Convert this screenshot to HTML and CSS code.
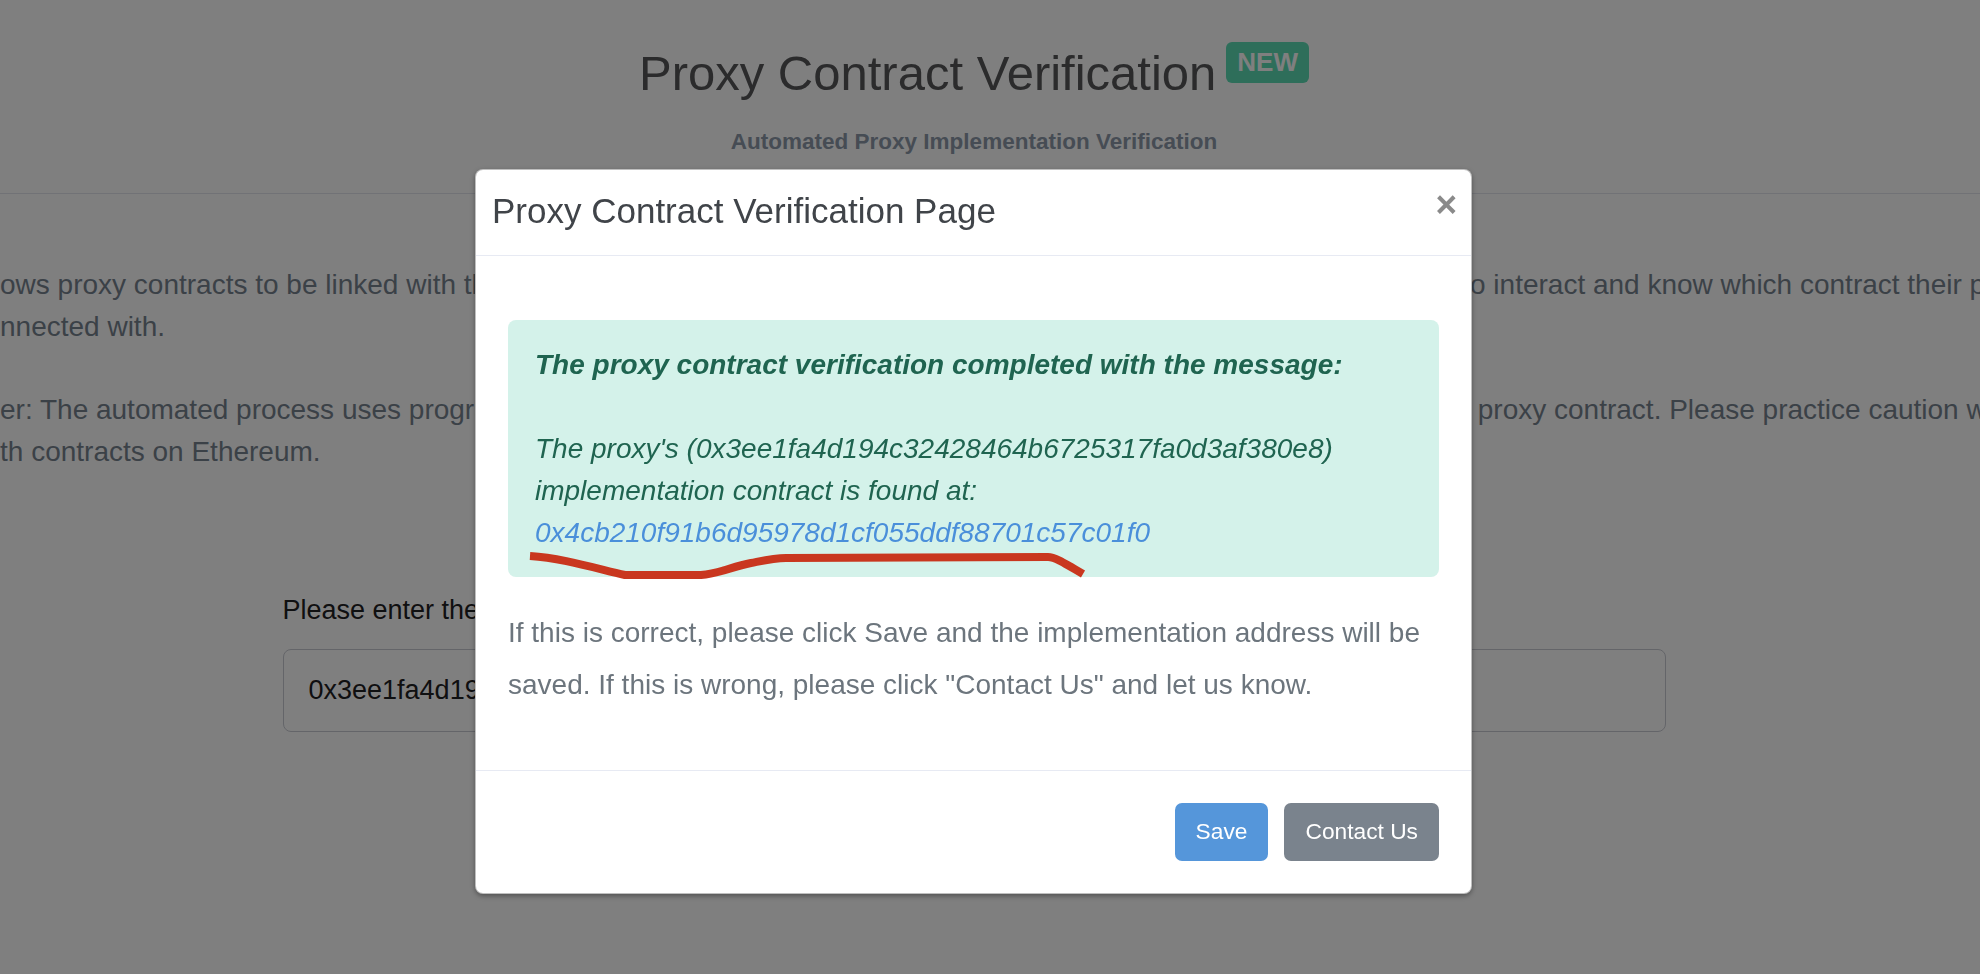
FILE: index.html
```html
<!DOCTYPE html>
<html lang="en">
<head>
<meta charset="utf-8">
<title>Proxy Contract Verification</title>
<link rel="stylesheet" href="styles.css">
</head>
<body>
<div class="page">
  <header class="page-header">
    <h1 class="title">Proxy Contract Verification<span class="badge-new">NEW</span></h1>
    <p class="subtitle">Automated Proxy Implementation Verification</p>
  </header>
  <main class="content">
    <div class="para">
      <div class="line"><span class="lead">ows proxy contracts to be linked with their implementation contract address so that users are able t</span><span class="tail">o interact and know which contract their proxy is co</span></div>
      <div class="line">nnected with.</div>
    </div>
    <div class="para">
      <div class="line"><span class="lead">er: The automated process uses programmatic logic to determine the implementation contract of the</span><span class="tail">&nbsp;proxy contract. Please practice caution when interacting wi</span></div>
      <div class="line">th contracts on Ethereum.</div>
    </div>
    <form class="verify-form">
      <label class="form-label" for="addr">Please enter the Proxy Contract Address you would like to verify</label>
      <input class="form-input" id="addr" type="text" value="0x3ee1fa4d194c32428464b6725317fa0d3af380e8">
    </form>
  </main>
</div>

<div class="backdrop"></div>

<div class="modal">
  <div class="modal-header">
    <h5 class="modal-title">Proxy Contract Verification Page</h5>
    <span class="close">&times;</span>
  </div>
  <div class="modal-body">
    <div class="alert">
      <strong>The proxy contract verification completed with the message:</strong><br><br>
      The proxy's (0x3ee1fa4d194c32428464b6725317fa0d3af380e8) implementation contract is found at: <a class="alert-link" href="#">0x4cb210f91b6d95978d1cf055ddf88701c57c01f0</a>
    </div>
    <p class="modal-text">If this is correct, please click Save and the implementation address will be saved. If this is wrong, please click "Contact Us" and let us know.</p>
  </div>
  <div class="modal-footer">
    <button class="btn btn-save" type="button">Save</button>
    <button class="btn btn-contact" type="button">Contact Us</button>
  </div>
  <svg class="scribble" width="997" height="725" viewBox="0 0 997 725">
    <path d="M54,386 C85,388 115,397 149,405 L225,405 C245,403 255,397 275,393 C290,390 298,388 310,388 L572,387 C578,387 585,391 607,404" fill="none" stroke="#c9371f" stroke-width="8" stroke-linejoin="round"/>
  </svg>
</div>
</body>
</html>
```

FILE: styles.css
```css
html, body {
  margin: 0;
  padding: 0;
}

body {
  width: 1980px;
  height: 974px;
  overflow: hidden;
  background: #ffffff;
  font-family: "Liberation Sans", Arial, Helvetica, sans-serif;
  color: #77838f;
}

.page {
  width: 1980px;
  height: 974px;
}

/* ---------- page header ---------- */
.page-header {
  padding: 44px 32px 34px 0;
  text-align: center;
  border-bottom: 1px solid #e2e5ec;
}

.title {
  margin: 0;
  font-size: 49px;
  font-weight: 400;
  line-height: 58.8px;
  color: #565759;
}

.badge-new {
  display: inline-block;
  vertical-align: top;
  margin: -2px 0 0 10px;
  padding: 0 11px;
  background: #5cdcb4;
  color: #ffffff;
  font-size: 26px;
  font-weight: 700;
  line-height: 41px;
  border-radius: 6px;
}

.subtitle {
  margin: 22px 0 0;
  font-size: 22.5px;
  font-weight: 700;
  line-height: 34px;
  color: #8c98a8;
}

/* ---------- page content ---------- */
.content {
  padding: 70px 32px 0 0;
}

.para {
  margin: 0 0 41px;
  font-size: 28px;
  line-height: 42px;
  color: #77838f;
}

.line {
  display: flex;
  white-space: nowrap;
}

.lead {
  flex: 0 0 1470px;
  overflow: hidden;
}

.tail {
  flex: none;
}

.verify-form {
  width: 1383px;
  margin: 116px auto 0;
}

.form-label {
  display: block;
  margin-bottom: 18px;
  font-size: 27px;
  line-height: 42px;
  color: #1e2022;
}

.form-input {
  display: block;
  box-sizing: border-box;
  width: 100%;
  height: 83px;
  margin: 0;
  padding: 0 25px;
  font-family: "Liberation Sans", Arial, sans-serif;
  font-size: 27px;
  color: #1e2022;
  background: #ffffff;
  border: 1px solid #c8cad2;
  border-radius: 8px;
}

/* ---------- modal ---------- */
.backdrop {
  position: fixed;
  inset: 0;
  background: rgba(0, 0, 0, 0.5);
}

.modal {
  position: absolute;
  left: 475px;
  top: 169px;
  width: 997px;
  box-sizing: border-box;
  background: #ffffff;
  border: 1px solid rgba(0, 0, 0, 0.25);
  border-radius: 8px;
  box-shadow: 0 2px 5px rgba(0, 0, 0, 0.35);
}

.modal-header {
  display: flex;
  justify-content: space-between;
  align-items: flex-start;
  padding: 15px 14px 17px 16px;
  border-bottom: 1px solid #e7eaf3;
}

.modal-title {
  margin: 0;
  font-size: 35px;
  font-weight: 400;
  line-height: 52.5px;
  color: #404449;
}

.close {
  margin-top: 1px;
  font-size: 37px;
  font-weight: 700;
  line-height: 38px;
  color: #8a8a8a;
}

.modal-body {
  padding: 32px;
}

.alert {
  margin: 32px 0 30px;
  padding: 24px 27px 23px;
  background: #d4f2ea;
  color: #1f6450;
  border-radius: 8px;
  font-size: 28px;
  line-height: 42px;
  font-style: italic;
}

.alert strong {
  font-weight: 700;
}

.alert-link {
  color: #4a8fda;
  text-decoration: none;
}

.modal-text {
  margin: 0 0 27px;
  font-size: 28px;
  line-height: 52px;
  color: #6c757d;
}

.modal-footer {
  display: flex;
  justify-content: flex-end;
  gap: 16px;
  padding: 32px;
  border-top: 1px solid #e7eaf3;
}

.btn {
  height: 58px;
  padding: 0 21px;
  border: 0;
  border-radius: 7px;
  font-family: "Liberation Sans", Arial, sans-serif;
  font-size: 22.75px;
  color: #ffffff;
}

.btn-save {
  background: #5596da;
}

.btn-contact {
  background: #7a838d;
}

.scribble {
  position: absolute;
  left: 0;
  top: 0;
  pointer-events: none;
}
```
